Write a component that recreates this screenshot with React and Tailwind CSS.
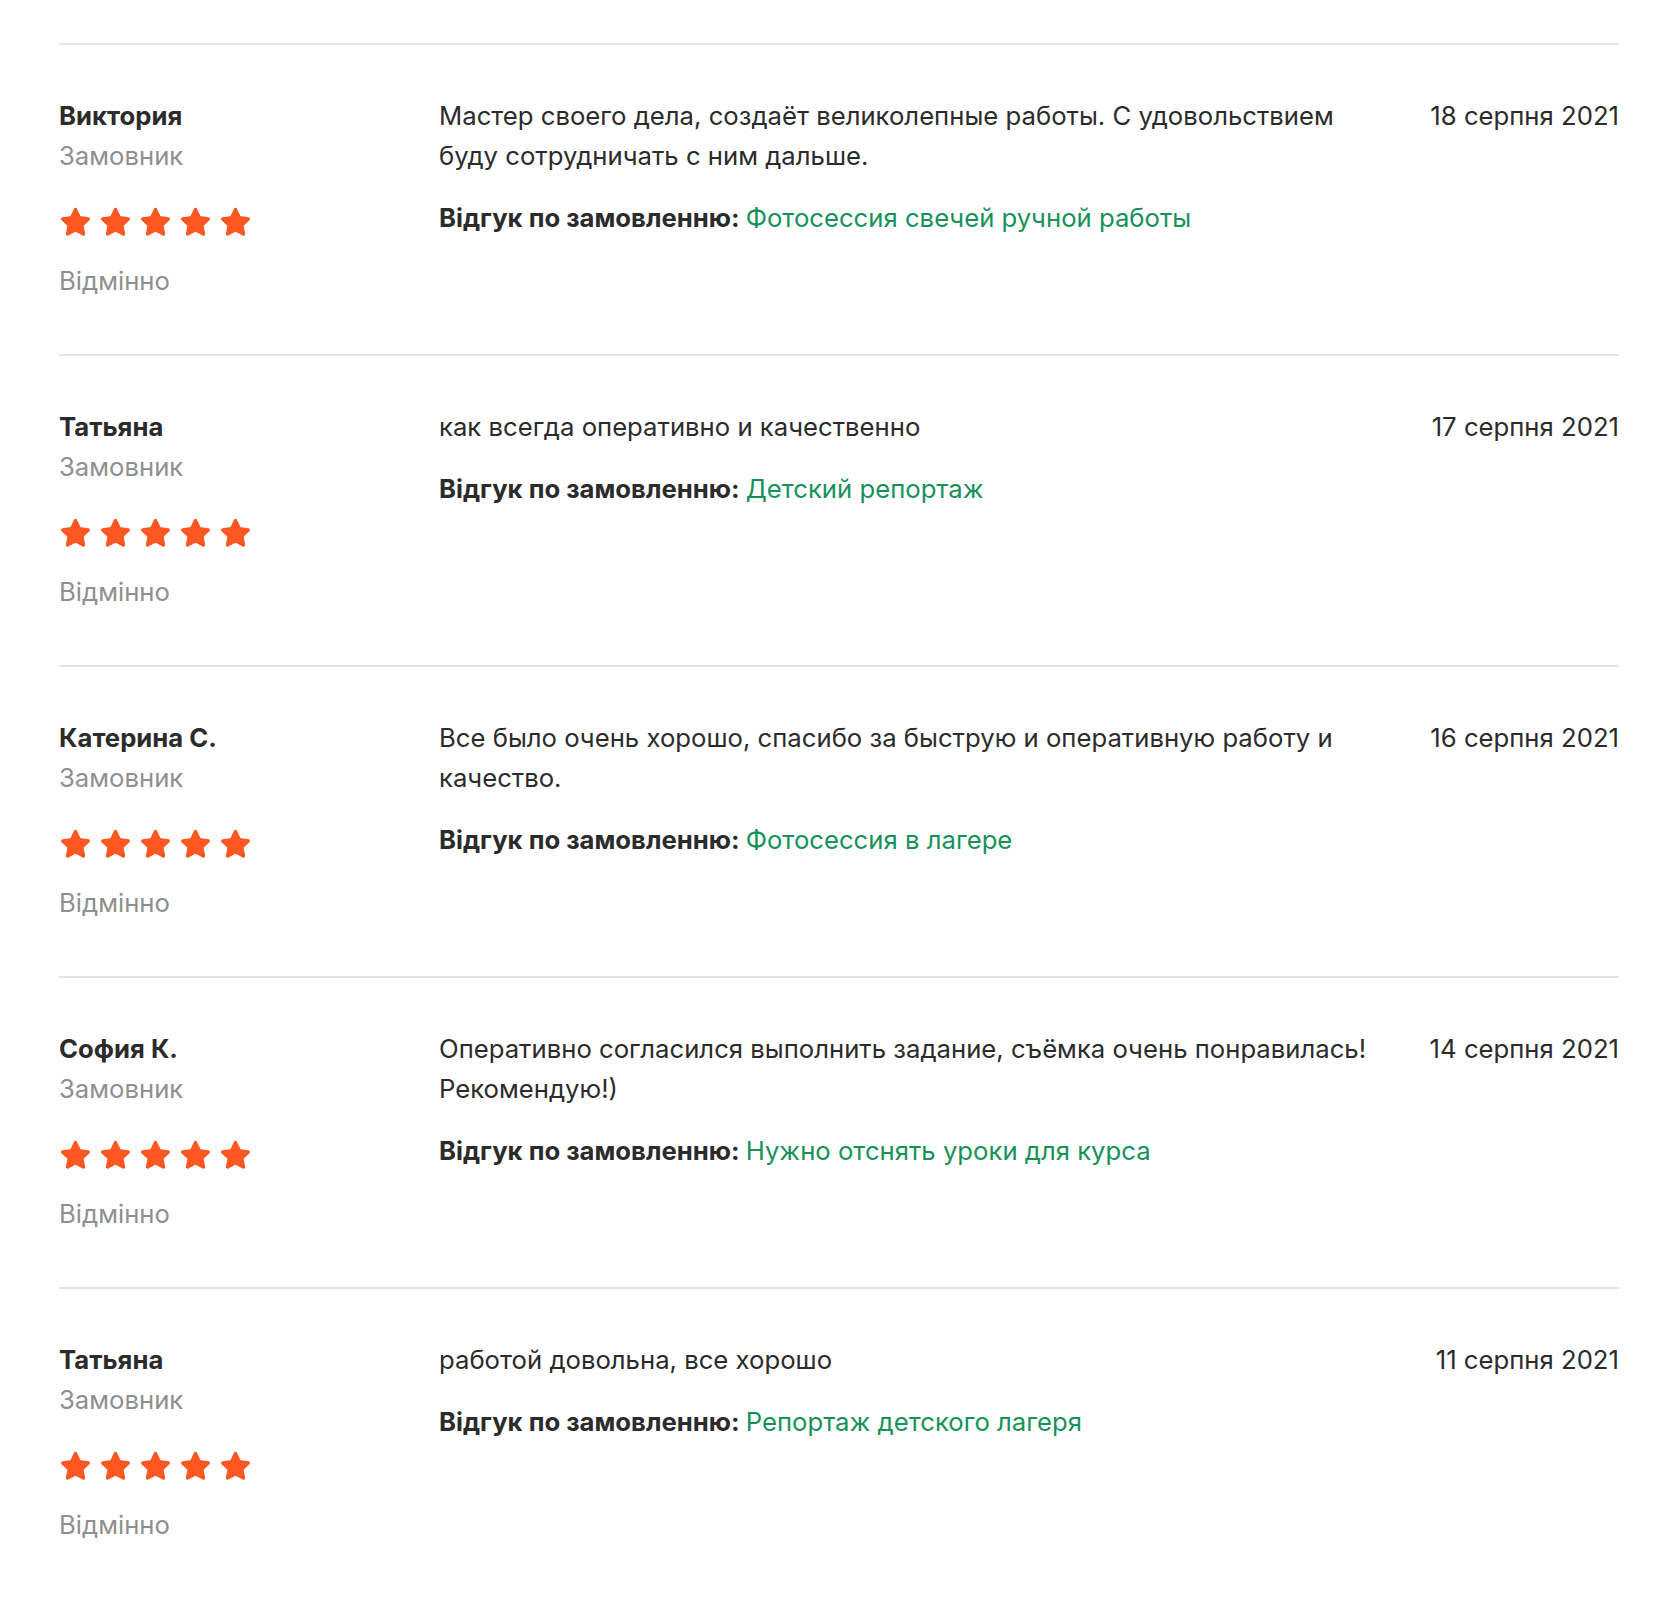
import React from 'react';

const reviews = [
  {
    name: 'Виктория',
    text: 'Мастер своего дела, создаёт великолепные работы. С удовольствием буду сотрудничать с ним дальше.',
    order: 'Фотосессия свечей ручной работы',
    date: '18 серпня 2021',
  },
  {
    name: 'Татьяна',
    text: 'как всегда оперативно и качественно',
    order: 'Детский репортаж',
    date: '17 серпня 2021',
  },
  {
    name: 'Катерина С.',
    text: 'Все было очень хорошо, спасибо за быструю и оперативную работу и качество.',
    order: 'Фотосессия в лагере',
    date: '16 серпня 2021',
  },
  {
    name: 'София К.',
    text: 'Оперативно согласился выполнить задание, съёмка очень понравилась! Рекомендую!)',
    order: 'Нужно отснять уроки для курса',
    date: '14 серпня 2021',
  },
  {
    name: 'Татьяна',
    text: 'работой довольна, все хорошо',
    order: 'Репортаж детского лагеря',
    date: '11 серпня 2021',
  },
];

const Star = () => (
  <svg width="35" height="35" viewBox="0 0 24 24" className="shrink-0">
    <path
      d="M12 3.2l2.65 5.6 6.1.8-4.5 4.2 1.2 6.1L12 16.9l-5.45 3l1.2-6.1-4.5-4.2 6.1-.8z"
      fill="#ff5722"
      stroke="#ff5722"
      strokeWidth="2.4"
      strokeLinejoin="round"
    />
  </svg>
);

const ReviewRow = ({ r }) => (
  <div className="flex border-t-2 border-[#e3e3e8] pt-[51px] pb-[53px]">
    {/* left: author + rating */}
    <div className="w-[380px] shrink-0">
      <div className="font-bold text-[#2b2b2b]">{r.name}</div>
      <div className="text-[#8f8f8f]">Замовник</div>
      <div className="flex gap-[5px] mt-[29px] -ml-[1px]">
        {[0, 1, 2, 3, 4].map((i) => (
          <Star key={i} />
        ))}
      </div>
      <div className="text-[#8f8f8f] mt-[21px]">Відмінно</div>
    </div>

    {/* middle: text */}
    <div className="w-[940px] shrink-0 text-[#2b2b2b]">
      <p>{r.text}</p>
      <p className="mt-[22px]">
        <span className="font-bold">Відгук по замовленню: </span>
        <span className="text-[#17915a]">{r.order}</span>
      </p>
    </div>

    {/* right: date */}
    <div className="flex-1 text-right text-[#2b2b2b] whitespace-nowrap">{r.date}</div>
  </div>
);

export default function App() {
  return (
    <div
      className="min-h-[1608px] bg-white pt-[43px] text-[25.7px] leading-[40px]"
      style={{ fontFamily: 'Inter, "Noto Sans", sans-serif' }}
    >
      <div className="w-[1560px] ml-[59px]">
        {reviews.map((r, i) => (
          <ReviewRow key={i} r={r} />
        ))}
      </div>
    </div>
  );
}
